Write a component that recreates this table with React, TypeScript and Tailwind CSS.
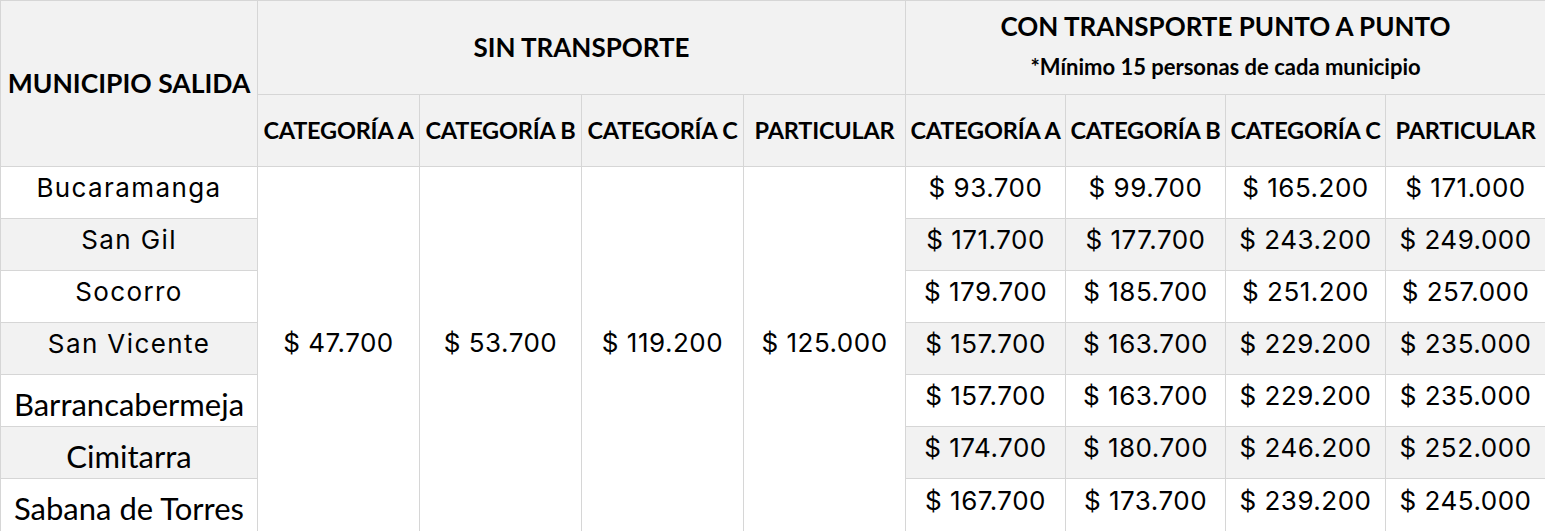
import React from 'react';

const calibri = "font-['Lato','Open_Sans',sans-serif]";
const poppins = "font-['Inter','Noto_Sans',sans-serif]";

const rows = [
  { name: 'Bucaramanga', geo: true, prices: ['$ 93.700', '$ 99.700', '$ 165.200', '$ 171.000'] },
  { name: 'San Gil', geo: true, prices: ['$ 171.700', '$ 177.700', '$ 243.200', '$ 249.000'] },
  { name: 'Socorro', geo: true, prices: ['$ 179.700', '$ 185.700', '$ 251.200', '$ 257.000'] },
  { name: 'San Vicente', geo: true, prices: ['$ 157.700', '$ 163.700', '$ 229.200', '$ 235.000'] },
  { name: 'Barrancabermeja', geo: false, prices: ['$ 157.700', '$ 163.700', '$ 229.200', '$ 235.000'] },
  { name: 'Cimitarra', geo: false, prices: ['$ 174.700', '$ 180.700', '$ 246.200', '$ 252.000'] },
  { name: 'Sabana de Torres', geo: false, prices: ['$ 167.700', '$ 173.700', '$ 239.200', '$ 245.000'] },
];

const sinTransporte = ['$ 47.700', '$ 53.700', '$ 119.200', '$ 125.000'];
const cats = ['CATEGORÍA A', 'CATEGORÍA B', 'CATEGORÍA C', 'PARTICULAR'];

const cell = 'border border-[#d6d6d6] text-center text-black p-0';

export default function App() {
  return (
    <div className="w-[1545px] h-[531px] bg-white overflow-hidden">
      <table className="w-[1545px] table-fixed border-collapse">
        <colgroup>
          <col className="w-[257px]" />
          <col className="w-[162px]" />
          <col className="w-[162px]" />
          <col className="w-[162px]" />
          <col className="w-[162px]" />
          <col className="w-[160px]" />
          <col className="w-[160px]" />
          <col className="w-[160px]" />
          <col className="w-[160px]" />
        </colgroup>
        <thead>
          <tr className="h-[94px] bg-[#f2f2f2]">
            <th rowSpan={2} className={`${cell} ${calibri} text-[26.5px] font-bold whitespace-nowrap`}>
              MUNICIPIO SALIDA
            </th>
            <th colSpan={4} className={`${cell} ${calibri} text-[26px] font-bold`}>
              SIN TRANSPORTE
            </th>
            <th colSpan={4} className={`${cell} ${calibri} font-bold`}>
              <div className="text-[26px] leading-[30px] mb-[14px] -mt-[6px]">CON TRANSPORTE PUNTO A PUNTO</div>
              <div className="text-[22px] leading-[24px]">*Mínimo 15 personas de cada municipio</div>
            </th>
          </tr>
          <tr className="h-[72px] bg-[#f2f2f2]">
            {[...cats, ...cats].map((c, i) => (
              <th key={i} className={`${cell} ${calibri} text-[23.5px] font-bold whitespace-nowrap tracking-[-0.2px]`}>
                {c}
              </th>
            ))}
          </tr>
        </thead>
        <tbody>
          {rows.map((r, i) => {
            const bg = i % 2 === 1 ? 'bg-[#f2f2f2]' : 'bg-white';
            return (
              <tr key={r.name} className={i === 6 ? 'h-[53px]' : 'h-[52px]'}>
                <td
                  className={`${cell} ${bg} whitespace-nowrap leading-[30px] ${
                    r.geo
                      ? `${poppins} text-[26px] tracking-[1.4px] font-normal pb-[9px]`
                      : `${calibri} text-[31px] pt-[6px]`
                  }`}
                >
                  {r.name}
                </td>
                {i === 0 &&
                  sinTransporte.map((p) => (
                    <td key={p} rowSpan={7} className={`${cell} bg-white ${poppins} text-[26px] leading-[30px] tracking-[0.5px] pb-[12px]`}>
                      {p}
                    </td>
                  ))}
                {r.prices.map((p, j) => (
                  <td key={j} className={`${cell} ${bg} ${poppins} text-[26px] leading-[30px] tracking-[0.5px] whitespace-nowrap pb-[9px]`}>
                    {p}
                  </td>
                ))}
              </tr>
            );
          })}
        </tbody>
      </table>
    </div>
  );
}
